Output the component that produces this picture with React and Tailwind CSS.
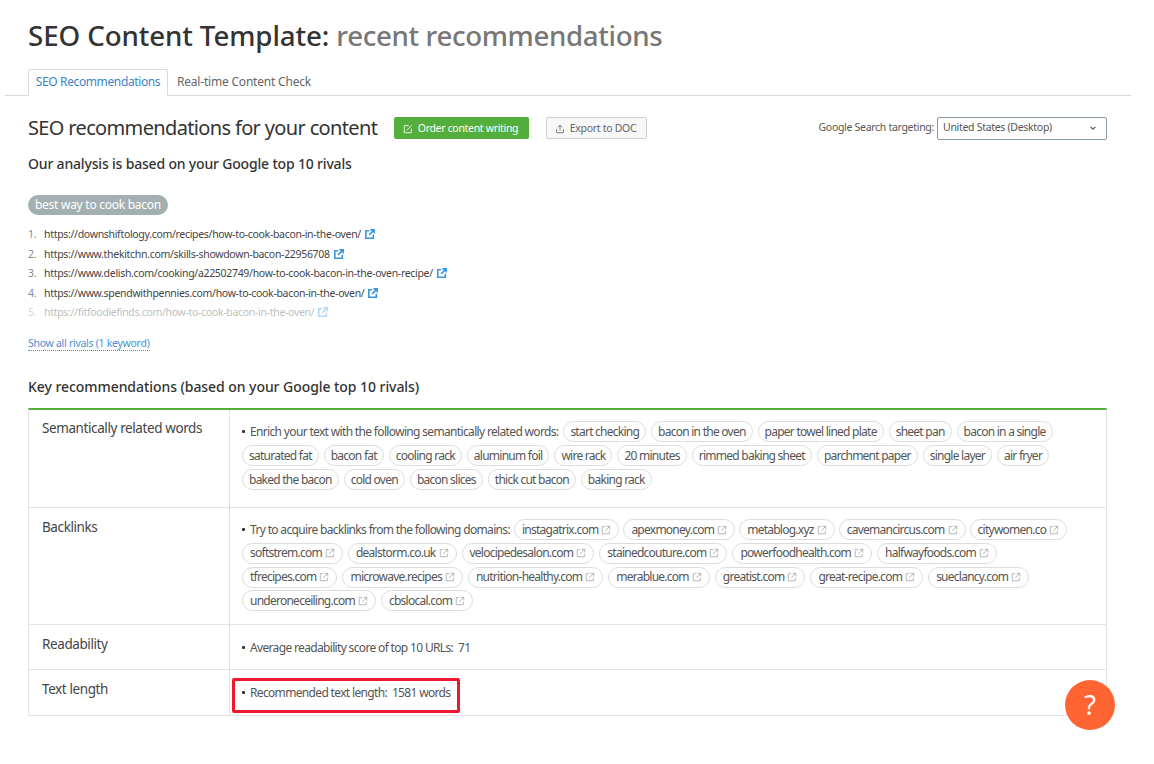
import React from "react";

const Ext = ({ className }) => (
  <svg viewBox="0 0 12 12" className={className} fill="none" stroke="currentColor">
    <path d="M5 2H1.5v8.5H10V7" />
    <path d="M6.5 1.5h4v4M10.5 1.5 5 7" />
  </svg>
);

const ExtBold = ({ className }) => (
  <svg viewBox="0 0 12 12" className={className} fill="none" stroke="currentColor" strokeWidth="1.9">
    <path d="M5 2H1v9h9V7" />
    <path d="M6.5 1h4.5v4.5M11 1 5 7" />
  </svg>
);

const Chip = ({ children, ext }) => (
  <span
    className={`inline-flex h-[21px] items-center gap-[3px] rounded-full border border-[#dcdcdc] whitespace-nowrap text-[12px] tracking-[-0.75px] text-[#555] ${
      ext ? "px-[7px]" : "px-[6px]"
    }`}
  >
    {children}
    {ext && <Ext className="h-[10px] w-[10px] text-[#aaa]" />}
  </span>
);

const rivals = [
  "https://downshiftology.com/recipes/how-to-cook-bacon-in-the-oven/",
  "https://www.thekitchn.com/skills-showdown-bacon-22956708",
  "https://www.delish.com/cooking/a22502749/how-to-cook-bacon-in-the-oven-recipe/",
  "https://www.spendwithpennies.com/how-to-cook-bacon-in-the-oven/",
  "https://fitfoodiefinds.com/how-to-cook-bacon-in-the-oven/",
];

const words = [
  ["saturated fat", "bacon fat", "cooling rack", "aluminum foil", "wire rack", "20 minutes", "rimmed baking sheet", "parchment paper", "single layer", "air fryer"],
  ["baked the bacon", "cold oven", "bacon slices", "thick cut bacon", "baking rack"],
];
const firstWords = ["start checking", "bacon in the oven", "paper towel lined plate", "sheet pan", "bacon in a single"];

const firstLinks = ["instagatrix.com", "apexmoney.com", "metablog.xyz", "cavemancircus.com", "citywomen.co"];
const links = [
  ["softstrem.com", "dealstorm.co.uk", "velocipedesalon.com", "stainedcouture.com", "powerfoodhealth.com", "halfwayfoods.com"],
  ["tfrecipes.com", "microwave.recipes", "nutrition-healthy.com", "merablue.com", "greatist.com", "great-recipe.com", "sueclancy.com"],
  ["underoneceiling.com", "cbslocal.com"],
];

const Bullet = ({ children }) => (
  <span className="inline-flex items-center whitespace-nowrap text-[12px] tracking-[-0.66px] text-[#555]">
    <span className="mr-[5px] h-[3px] w-[3px] rounded-[1px] bg-[#333]" />
    {children}
  </span>
);

const Row = ({ label, children, className, first }) => (
  <div className={`flex border-b border-[#e4e4e4] ${className}`}>
    <div
      className={`w-[201px] shrink-0 border-r border-dotted border-[#c8c8c8] pl-[13px] text-[13.5px] leading-[19px] tracking-[-0.4px] text-[#444] ${
        first ? "pt-[9px]" : "pt-[10px]"
      }`}
    >
      {label}
    </div>
    <div className="min-w-0 flex-1">{children}</div>
  </div>
);

export default function App() {
  return (
    <div className="relative h-[764px] w-[1154px] overflow-hidden bg-white font-['Noto_Sans',sans-serif]">
      <div className="ml-[5px] w-[1126px]">
        <h1 className="pl-[23px] pt-[16px] text-[27.7px] font-medium leading-[38px] tracking-[-0.1px] whitespace-nowrap text-[#333]">
          SEO Content Template: <span className="tracking-[-0.35px] text-[#777]">recent recommendations</span>
        </h1>
        <div className="mt-[15px] flex h-[27px] border-b border-[#d9d9d9] pl-[23px] text-[12px] tracking-[-0.2px]">
          <div className="flex h-[27px] w-[140px] items-center justify-center whitespace-nowrap rounded-t-[3px] border border-b-white border-[#d9d9d9] bg-white pb-[1px] tracking-[-0.38px] text-[#3d85c6]">
            SEO Recommendations
          </div>
          <div className="flex h-[26px] items-center whitespace-nowrap pl-[9px] text-[#666]">Real-time Content Check</div>
        </div>
      </div>

      <div className="pl-[28px] pr-[47px]">
        <div className="mt-[18px] flex h-[28px] items-center">
          <h2 className="w-[366px] whitespace-nowrap text-[20px] leading-[28px] tracking-[-0.65px] text-[#333]">
            SEO recommendations for your content
          </h2>
          <button className="flex h-[22px] w-[135px] items-center justify-center gap-[5px] rounded-[2px] bg-[#53ae3c] pt-[1px] pr-[2px] text-[10.5px] tracking-[-0.32px] text-white">
            <svg viewBox="0 0 12 12" className="h-[10px] w-[10px]" fill="none" stroke="currentColor">
              <path d="M7 2H1.5v8.5H10V5.5" />
              <path d="M4.5 7.5 10.5 1.5" />
            </svg>
            Order content writing
          </button>
          <button className="ml-[17px] flex h-[22px] w-[101px] items-center justify-center gap-[5px] rounded-[2px] border border-[#cfcfcf] bg-[#f8f8f8] pt-[1px] pr-[2px] text-[10.5px] tracking-[-0.3px] text-[#666]">
            <svg viewBox="0 0 12 12" className="h-[10px] w-[10px]" fill="none" stroke="currentColor">
              <path d="M2 6v4.5h8V6" />
              <path d="M6 8V1.5M3.5 4 6 1.5 8.5 4" />
            </svg>
            Export to DOC
          </button>
          <div className="ml-auto flex items-center gap-[3px]">
            <span className="text-[10.5px] tracking-[-0.3px] text-[#555]">Google Search targeting:</span>
            <div className="flex h-[23px] w-[170px] items-center justify-between rounded-[2px] border border-[#8a9aa5] pl-[5px] pr-[9px] text-[10.5px] tracking-[-0.3px] text-[#555]">
              United States (Desktop)
              <svg viewBox="0 0 10 10" className="h-[8px] w-[8px]" fill="none" stroke="#555" strokeWidth="1.5">
                <path d="M2 3.5 5 6.5 8 3.5" />
              </svg>
            </div>
          </div>
        </div>

        <h3 className="mt-[12px] text-[14px] font-medium leading-[20px] tracking-[-0.18px] text-[#333]">
          Our analysis is based on your Google top 10 rivals
        </h3>

        <div className="mt-[21px] inline-flex h-[20px] items-center rounded-full bg-[#a4afb2] px-[7px] text-[12px] tracking-[-0.27px] text-white">
          best way to cook bacon
        </div>

        <ol className="mt-[12px] flex flex-col gap-[5.6px] text-[10.5px] leading-[14px] tracking-[-0.31px]">
          {rivals.map((url, i) => (
            <li key={url} className={`flex items-center ${i === 4 ? "opacity-35" : ""}`}>
              <span className="w-[16px] text-[#888]">{i + 1}.</span>
              <span className="text-[#444]">{url}</span>
              <ExtBold className="ml-[4px] h-[10px] w-[10px] text-[#3d94e0]" />
            </li>
          ))}
        </ol>

        <div className="mt-[10px]">
          <span className="border-b border-dotted border-[#4a90d0] text-[10.5px] leading-[13px] tracking-[-0.28px] text-[#4a90d0]">
            Show all rivals (1 keyword)
          </span>
        </div>

        <h3 className="mt-[24px] text-[14px] font-medium leading-[20px] tracking-[-0.06px] text-[#333]">
          Key recommendations (based on your Google top 10 rivals)
        </h3>

        <div className="mt-[11px] border-l border-r border-t-2 border-[#e4e4e4] border-t-[#53ae3c]">
          <Row label="Semantically related words" className="h-[98px]" first>
            <div className="flex flex-col gap-[3px] pl-[12px] pt-[11px]">
              <div className="flex items-center gap-[5px]">
                <Bullet>Enrich your text with the following semantically related words:</Bullet>
                {firstWords.map((w) => <Chip key={w}>{w}</Chip>)}
              </div>
              {words.map((r, i) => (
                <div key={i} className="flex gap-[5px]">
                  {r.map((w) => <Chip key={w}>{w}</Chip>)}
                </div>
              ))}
            </div>
          </Row>
          <Row label="Backlinks" className="h-[117px]">
            <div className="flex flex-col gap-[2.6px] pl-[12px] pt-[11px]">
              <div className="flex items-center gap-[4px]">
                <Bullet>Try to acquire backlinks from the following domains:</Bullet>
                {firstLinks.map((w) => <Chip key={w} ext>{w}</Chip>)}
              </div>
              {links.map((r, i) => (
                <div key={i} className="flex gap-[5px]">
                  {r.map((w) => <Chip key={w} ext>{w}</Chip>)}
                </div>
              ))}
            </div>
          </Row>
          <Row label="Readability" className="h-[45px]">
            <div className="flex pl-[12px] pt-[14px] leading-[17px]">
              <Bullet>Average readability score of top 10 URLs:&nbsp; 71</Bullet>
            </div>
          </Row>
          <Row label="Text length" className="h-[46px]">
            <div className="relative flex pl-[12px] pt-[14px] leading-[17px]">
              <Bullet>Recommended text length:&nbsp; 1581 words</Bullet>
              <div className="absolute left-[2px] top-[8px] h-[35px] w-[228px] rounded-[2px] border-[3px] border-[#f0162f]" />
            </div>
          </Row>
        </div>
      </div>

      <div className="absolute left-[1065px] top-[680px] flex h-[50px] w-[50px] items-center justify-center rounded-full bg-[#ff6533] text-[27px] text-white">
        ?
      </div>
    </div>
  );
}
